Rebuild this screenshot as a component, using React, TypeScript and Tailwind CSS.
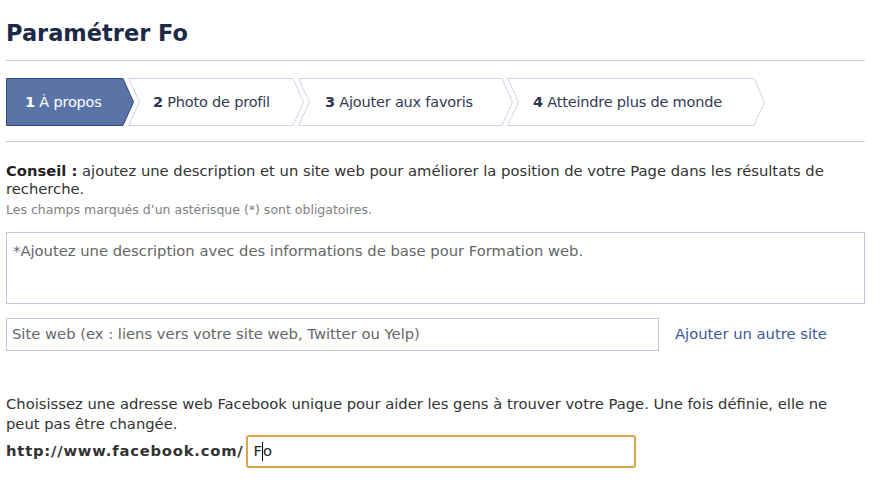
import React from 'react';

const TABS = [
  { n: '1', label: 'À propos', w: 128, pl: 'pl-[19px]', active: true },
  { n: '2', label: 'Photo de profil', w: 176, pl: 'pl-[25px]', active: false },
  { n: '3', label: 'Ajouter aux favoris', w: 215, pl: 'pl-[27px]', active: false },
  { n: '4', label: 'Atteindre plus de monde', w: 258, pl: 'pl-[26px]', active: false },
];

function Tab({ n, label, w, pl, active, first }: { n: string; label: string; w: number; pl: string; active: boolean; first: boolean }) {
  const h = 48;
  const pts = first
    ? `0.5,0.5 ${w - 11},0.5 ${w - 0.5},${h / 2} ${w - 11},${h - 0.5} 0.5,${h - 0.5}`
    : `0.5,0.5 ${w - 11},0.5 ${w - 0.5},${h / 2} ${w - 11},${h - 0.5} 0.5,${h - 0.5} 11.5,${h / 2}`;
  return (
    <div className={`relative h-[48px] flex items-center shrink-0 pt-[2px] ${first ? '' : '-ml-[6px]'} ${pl}`} style={{ width: w }}>
      <svg className="absolute inset-0" width={w} height={h}>
        <polygon points={pts} fill={active ? '#5b74a8' : '#ffffff'} stroke={active ? '#2f4a86' : '#cdd4e6'} strokeWidth="1" />
      </svg>
      <span className={`relative text-[14.5px] whitespace-nowrap tracking-[-0.2px] ${active ? 'text-white' : 'text-[#333a55]'}`}>
        <b className={active ? 'text-white' : 'text-[#2a3350]'}>{n}</b> {label}
      </span>
    </div>
  );
}

export default function App() {
  return (
    <div className="w-[884px] h-[488px] bg-white px-[6px] text-[#333] font-['DejaVu_Sans',Verdana,sans-serif] overflow-hidden">
      <h1 className="pt-[20px] text-[22.5px] leading-[26px] font-bold text-[#1c2a47]">Paramétrer Fo</h1>

      <div className="mt-[14px] w-[859px] border-t border-[#cccccc]" />

      <div className="mt-[17px] flex">
        {TABS.map((t, i) => (
          <Tab key={t.n} {...t} first={i === 0} />
        ))}
      </div>

      <div className="mt-[15px] w-[859px] border-t border-[#cccccc]" />

      <p className="mt-[20px] w-[860px] text-[14.75px] leading-[18px]">
        <b className="text-[#222]">Conseil :</b> ajoutez une description et un site web pour améliorer la position de votre Page dans les résultats de recherche.
      </p>
      <p className="mt-[4px] text-[12.5px] leading-[16px] text-[#808080]">Les champs marqués d’un astérisque (*) sont obligatoires.</p>

      <div className="mt-[14px] w-[859px] h-[72px] border border-[#bdc7d8] px-[6px] pt-[7px] text-[14.75px] text-[#666]">
        *Ajoutez une description avec des informations de base pour Formation web.
      </div>

      <div className="mt-[14px] flex items-center">
        <div className="w-[653px] h-[33px] border border-[#bdc7d8] px-[5px] flex items-center text-[14.75px] text-[#666]">
          Site web (ex : liens vers votre site web, Twitter ou Yelp)
        </div>
        <span className="ml-[16px] text-[14.75px] text-[#3b5998]">Ajouter un autre site</span>
      </div>

      <p className="mt-[43px] w-[840px] text-[14.75px] leading-[20px]">
        Choisissez une adresse web Facebook unique pour aider les gens à trouver votre Page. Une fois définie, elle ne peut pas être changée.
      </p>
      <div className="mt-[1px] flex items-center">
        <b className="text-[14.75px] text-[#333] tracking-[0.8px]">http://www.facebook.com/</b>
        <div className="ml-[2px] w-[390px] h-[33px] border-2 border-[#dba54a] rounded-[3px] px-[6px] flex items-center text-[14.75px] text-[#222]">
          F<span className="inline-block w-px h-[19px] bg-black" />o
        </div>
      </div>
    </div>
  );
}
